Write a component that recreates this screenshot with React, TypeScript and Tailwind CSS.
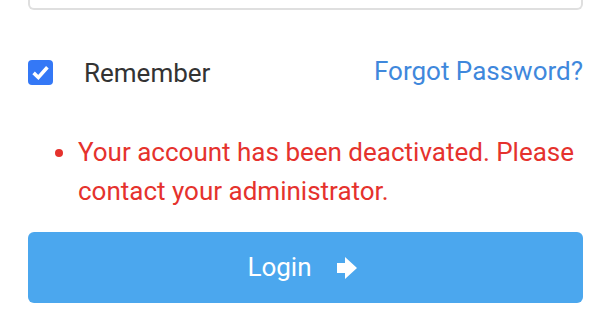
import React from "react";

export default function App() {
  return (
    <div className="w-[606px] h-[324px] bg-white overflow-hidden" style={{ fontFamily: "Roboto, 'Liberation Sans', sans-serif" }}>
      <div className="ml-[28px] w-[555px] flex flex-col">
        <div className="h-[10px] border-2 border-t-0 border-[#dfdfdf] rounded-b-[6px]" />
        <div className="mt-[50px] h-[25px] flex items-center justify-between">
          <label className="flex items-center">
            <span className="w-[25px] h-[25px] rounded-[4px] bg-[#3478f6] flex items-center justify-center">
              <svg width="19" height="19" viewBox="0 0 16 16">
                <path d="M2.2 8.3 L6.2 12.2 L13.8 3.6" fill="none" stroke="white" strokeWidth="3" strokeLinecap="butt" strokeLinejoin="miter" />
              </svg>
            </span>
            <span className="ml-[31px] text-[26px] leading-none text-[#333333]">Remember</span>
          </label>
          <a className="text-[26px] leading-none text-[#3f88dc] -mt-[3px]">Forgot Password?</a>
        </div>
        <ul className="mt-[48px] pl-[50px] list-disc text-[26px] leading-[39px] text-[#e5322d]">
          <li className="marker:text-[#e5322d]">Your account has been deactivated. Please contact your administrator.</li>
        </ul>
        <button className="mt-[21px] h-[71px] w-full rounded-[6px] bg-[#4ba7ee] flex items-center justify-center text-white text-[26px]">
          <span>Login</span>
          <svg className="ml-[25px] mr-[7px] mt-[1px]" width="20" height="22" viewBox="0 0 20 22">
            <polygon points="0,6 8,6 8,0 20,11 8,22 8,16 0,16" fill="white" />
          </svg>
        </button>
      </div>
    </div>
  );
}
